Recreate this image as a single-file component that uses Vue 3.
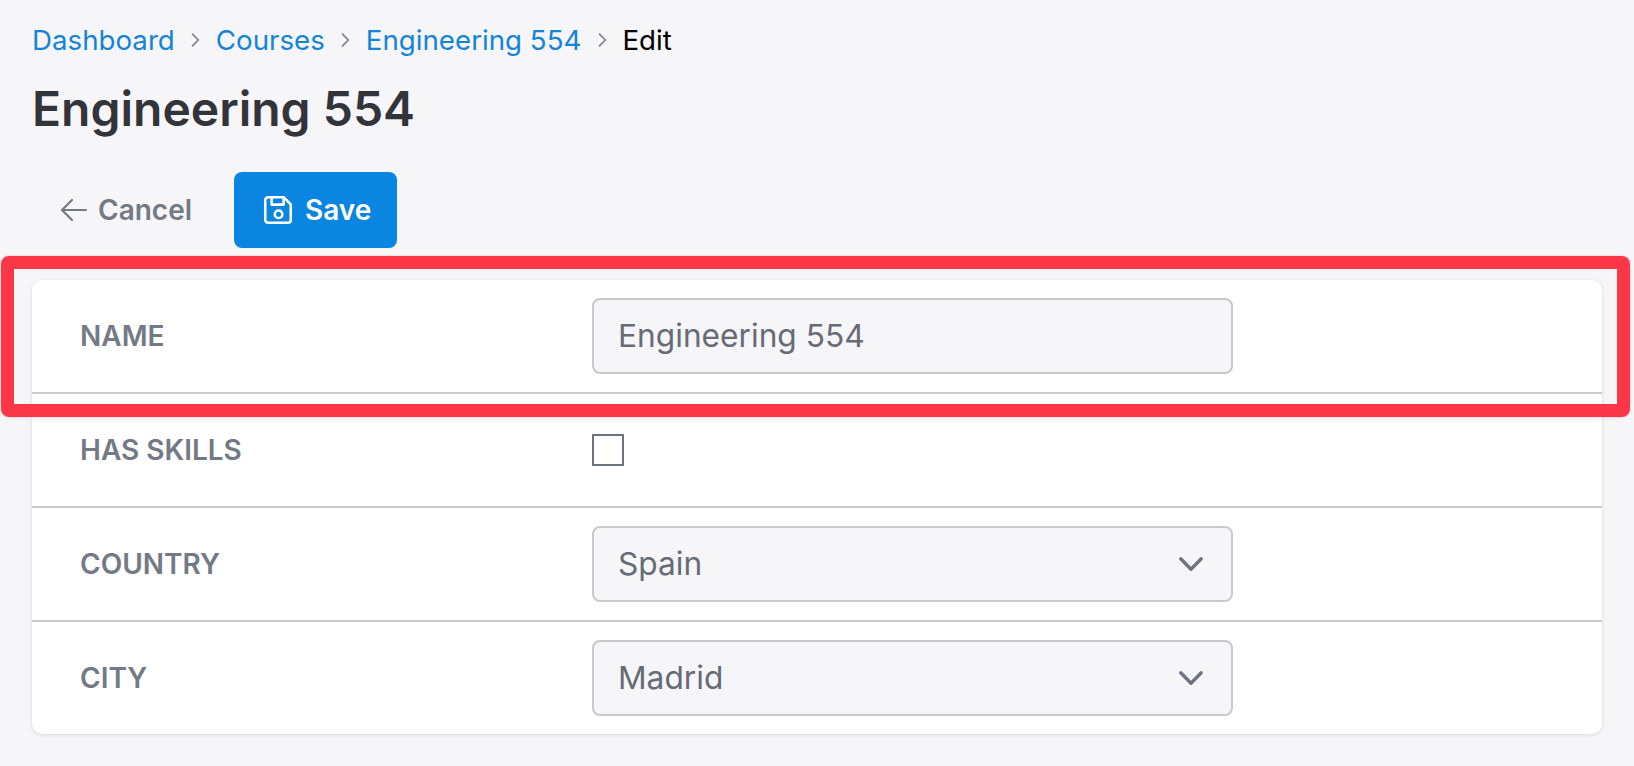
<template>
  <div class="page">
    <nav class="crumbs">
      <template v-for="crumb in crumbs" :key="crumb">
        <a class="crumbs__link">{{ crumb }}</a>
        <svg class="crumbs__sep" viewBox="0 0 24 24" fill="none" stroke="currentColor" stroke-width="2" stroke-linecap="round" stroke-linejoin="round">
          <path d="M9 5l7 7-7 7" />
        </svg>
      </template>
      <span class="crumbs__current">Edit</span>
    </nav>

    <h1 class="title">Engineering 554</h1>

    <div class="actions">
      <button class="btn btn--ghost" type="button">
        <svg class="btn__icon" viewBox="0 0 24 24" fill="none" stroke="currentColor" stroke-width="1.6" stroke-linecap="round" stroke-linejoin="round">
          <path d="M10.5 19.5L3 12m0 0l7.5-7.5M3 12h18" />
        </svg>
        Cancel
      </button>
      <button class="btn btn--primary" type="button">
        <svg class="btn__icon" viewBox="0 0 24 24" fill="none" stroke="currentColor" stroke-width="1.8" stroke-linecap="round" stroke-linejoin="round">
          <path d="M5 3h11l5 5v11a2 2 0 0 1-2 2H5a2 2 0 0 1-2-2V5a2 2 0 0 1 2-2z" />
          <path d="M7.5 3v5.2h8.5V3" />
          <circle cx="12.4" cy="15" r="2.7" />
        </svg>
        Save
      </button>
    </div>

    <div class="card">
      <div class="row">
        <label class="row__label">Name</label>
        <div class="field">Engineering 554</div>
      </div>
      <div class="row">
        <label class="row__label">Has skills</label>
        <span class="check"></span>
      </div>
      <div v-for="item in selects" :key="item.label" class="row">
        <label class="row__label">{{ item.label }}</label>
        <div class="field">
          <span>{{ item.value }}</span>
          <svg class="field__chevron" viewBox="0 0 24 24" fill="none" stroke="currentColor" stroke-width="2.8" stroke-linecap="round" stroke-linejoin="round">
            <path d="M3.2 7.5l8.8 9 8.8-9" />
          </svg>
        </div>
      </div>
    </div>

    <div class="highlight"></div>
  </div>
</template>

<script setup>
const crumbs = ['Dashboard', 'Courses', 'Engineering 554']

const selects = [
  { label: 'Country', value: 'Spain' },
  { label: 'City', value: 'Madrid' }
]
</script>

<style>
html,
body {
  margin: 0;
  background: #f6f6f9;
}
</style>

<style scoped>
.page {
  position: relative;
  box-sizing: border-box;
  height: 766px;
  padding: 24px 32px 0;
  overflow: hidden;
  font-family: Inter, "Liberation Sans", sans-serif;
  color: #32343a;
}

.crumbs {
  display: flex;
  align-items: center;
  gap: 10.5px;
  height: 32px;
  font-size: 27.7px;
  line-height: 32px;
}

.crumbs__link {
  color: #1484d8;
}

.crumbs__sep {
  width: 20px;
  height: 20px;
  color: #7b7f87;
}

.crumbs__current {
  color: #000;
}

.title {
  margin: 23px 0 0;
  font-size: 48px;
  line-height: 60px;
  font-weight: 600;
}

.actions {
  display: flex;
  gap: 16px;
  margin-top: 33px;
}

.btn {
  display: flex;
  align-items: center;
  height: 76px;
  border: 0;
  border-radius: 8px;
  font: 600 28px Inter, "Liberation Sans", sans-serif;
}

.btn--ghost {
  gap: 8px;
  padding: 0 26px;
  background: transparent;
  color: #737a85;
}

.btn--primary {
  gap: 10px;
  padding: 0 26px 0 27px;
  background: #0a86e0;
  color: #fff;
}

.btn__icon {
  width: 32px;
  height: 32px;
  flex: none;
}

.btn--primary .btn__icon {
  width: 34px;
  height: 34px;
}

.card {
  margin-top: 32px;
  background: #fff;
  border-radius: 10px;
  box-shadow: 0 1px 4px rgba(0, 0, 0, 0.12);
}

.row {
  display: grid;
  grid-template-columns: 512px 641px;
  align-items: center;
  box-sizing: border-box;
  height: 114px;
  padding: 0 48px;
  border-bottom: 2px solid #c9cacd;
}

.row:first-child {
  height: 113.5px;
}

.row:last-child {
  height: 112.5px;
  border-bottom: 0;
}

.row__label {
  font-size: 28px;
  font-weight: 600;
  text-transform: uppercase;
  color: #737a85;
}

.field {
  display: flex;
  align-items: center;
  justify-content: space-between;
  box-sizing: border-box;
  height: 76px;
  padding: 0 26px 0 24px;
  border: 2px solid #c8c9cc;
  border-radius: 8px;
  background: #f6f6f9;
  font-size: 31.7px;
  color: #666b75;
}

.field__chevron {
  width: 28px;
  height: 28px;
  color: #6b7280;
}

.check {
  box-sizing: border-box;
  width: 32px;
  height: 32px;
  border: 2px solid #6b7280;
  background: #fff;
}

.highlight {
  position: absolute;
  left: 1px;
  top: 256px;
  box-sizing: border-box;
  width: 1629px;
  height: 161px;
  border: 13px solid #fb3646;
  border-radius: 8px;
  box-shadow: 0 0 3px rgba(251, 54, 70, 0.3);
}
</style>
